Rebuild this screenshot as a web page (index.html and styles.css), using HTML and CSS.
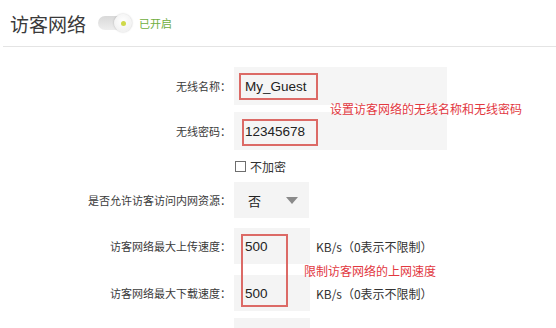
FILE: index.html
```html
<!DOCTYPE html>
<html lang="zh">
<head>
<meta charset="utf-8">
<link rel="stylesheet" href="styles.css">
</head>
<body>
<div class="page">
  <div class="header">
    <span class="title">访客网络</span>
    <span class="toggle"><span class="knob"><span class="dot"></span></span></span>
    <span class="state">已开启</span>
  </div>
  <div class="form">
    <div class="row r1">
      <div class="label">无线名称：</div>
      <div class="field wide">My_Guest</div>
    </div>
    <div class="row r2">
      <div class="label">无线密码：</div>
      <div class="field wide">12345678</div>
    </div>
    <div class="row rc">
      <div class="label"></div>
      <label class="check"><span class="box"></span>不加密</label>
    </div>
    <div class="row r3">
      <div class="label">是否允许访客访问内网资源：</div>
      <div class="field select"><span>否</span><span class="arrow"></span></div>
    </div>
    <div class="row r4">
      <div class="label">访客网络最大上传速度：</div>
      <div class="field">500</div>
      <div class="unit">KB/s（0表示不限制）</div>
    </div>
    <div class="row r5">
      <div class="label">访客网络最大下载速度：</div>
      <div class="field">500</div>
      <div class="unit">KB/s（0表示不限制）</div>
    </div>
    <div class="row r6">
      <div class="label"></div>
      <div class="field"></div>
    </div>
  </div>
  <div class="mark m1"></div>
  <div class="mark m2"></div>
  <div class="mark m3"></div>
  <div class="note n1">设置访客网络的无线名称和无线密码</div>
  <div class="note n2">限制访客网络的上网速度</div>
</div>
</body>
</html>
```
FILE: styles.css
```css
html, body { margin: 0; padding: 0; background: #fff; }
body { width: 556px; height: 328px; overflow: hidden; }
.page {
  position: relative;
  width: 556px;
  height: 328px;
  overflow: hidden;
  font-family: "Noto Sans CJK SC", "Liberation Sans", sans-serif;
  color: #333;
}
.header {
  display: flex;
  align-items: center;
  padding-left: 10px;
  margin-left: 3px;
  border-bottom: 1px solid #e4e4e4;
  box-sizing: border-box;
  height: 47px;
}
.title { font-size: 19px; color: #3a3a3a; margin-left: -3px; }
.toggle {
  margin-left: 12px;
  width: 34px;
  height: 14px;
  border-radius: 7px;
  background: linear-gradient(#d9d9d9, #eeeeee);
  display: flex;
  align-items: center;
  justify-content: flex-end;
}
.knob {
  width: 18px;
  height: 18px;
  border-radius: 50%;
  background: radial-gradient(circle at 50% 40%, #ffffff, #ececec);
  box-shadow: 0 0 2px rgba(0,0,0,0.25);
  display: flex;
  align-items: center;
  justify-content: center;
}
.dot { width: 5px; height: 5px; border-radius: 50%; background: #cfd94a; }
.state { margin-left: 7px; font-size: 11px; color: #6fae3e; }

.form { padding-top: 20px; }
.row {
  display: grid;
  grid-template-columns: 234px auto auto;
  justify-content: start;
  align-items: center;
  font-size: 11px;
}
.label { text-align: right; padding-right: 3px; color: #3a3a3a; }
.field {
  background: #f4f4f4;
  height: 36px;
  width: 76px;
  box-sizing: border-box;
  padding-left: 11px;
  display: flex;
  align-items: center;
  font-family: "Liberation Sans", "Noto Sans CJK SC", sans-serif;
  font-size: 13.5px;
  color: #222;
}
.field.wide { width: 213px; height: 38px; background: #f5f5f5; }
.r1 { height: 38px; }
.r2 { height: 38px; margin-top: 7px; }
.rc { height: 20px; margin-top: 6px; }
.r3 { height: 36px; margin-top: 6px; }
.r4 { height: 36px; margin-top: 10px; }
.r5 { height: 36px; margin-top: 11px; }
.r6 { height: 10px; margin-top: 7px; align-items: start; }
.r6 .field { height: 10px; }
.select { width: 75px; justify-content: space-between; padding-right: 11px; padding-left: 14px; }
.select span:first-child { font-family: "Noto Sans CJK SC", sans-serif; font-size: 13px; }
.arrow {
  width: 0; height: 0;
  border-left: 6px solid transparent;
  border-right: 6px solid transparent;
  border-top: 7px solid #8a8a8a;
}
.check { display: flex; align-items: center; font-size: 12px; color: #333; }
.box {
  width: 9px; height: 9px;
  border: 1px solid #6e6e6e;
  background: #fff;
  margin-right: 4px;
  margin-left: 1px;
}
.unit { margin-left: 6px; font-size: 12px; color: #333; }

.mark { position: absolute; border: 2px solid #dc6a66; box-sizing: border-box; }
.m1 { left: 239px; top: 73px; width: 79px; height: 27px; }
.m2 { left: 242px; top: 119px; width: 76px; height: 27px; }
.m3 { left: 241px; top: 234px; width: 47px; height: 73px; }
.note { position: absolute; font-size: 12px; color: #e2383f; white-space: nowrap; }
.n1 { left: 330px; top: 100px; }
.n2 { left: 304px; top: 262px; }
```
